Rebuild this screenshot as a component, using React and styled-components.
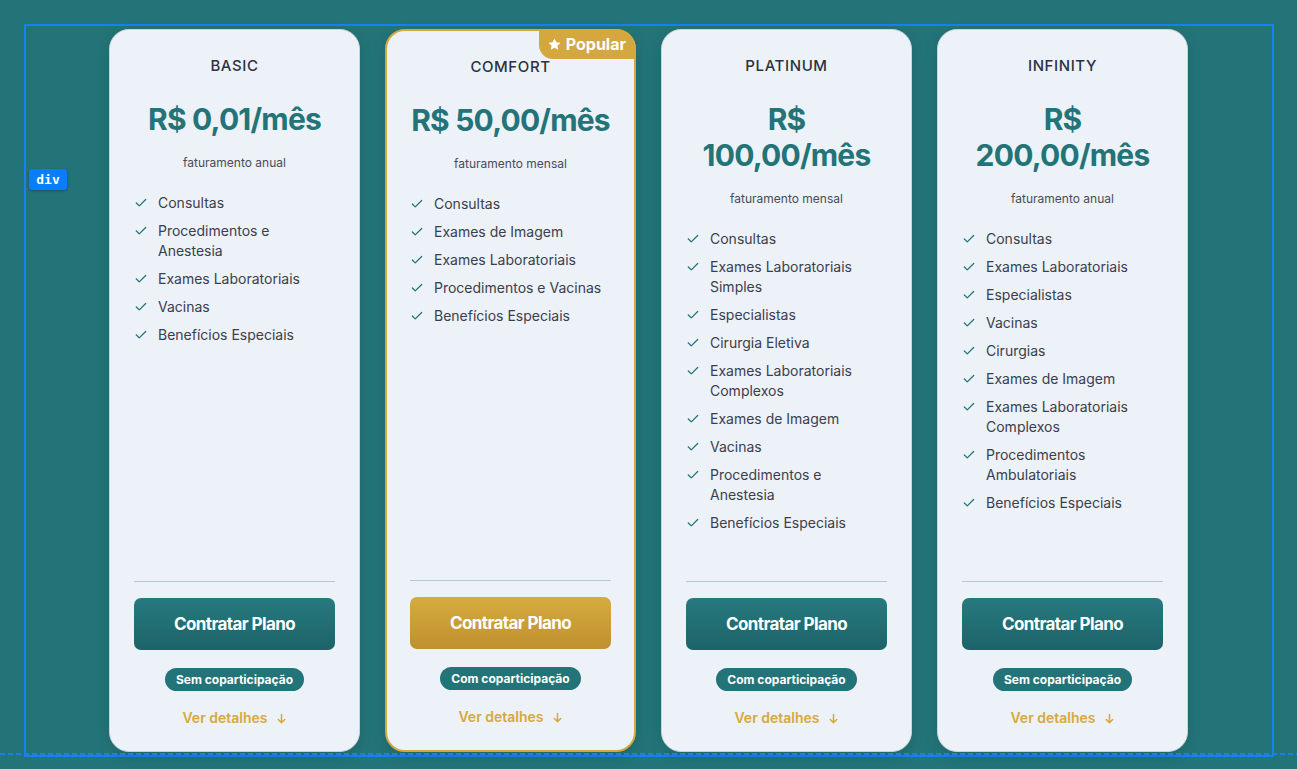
import React from "react";
import styled, { createGlobalStyle, css } from "styled-components";

const GlobalStyle = createGlobalStyle`
  html, body { margin: 0; padding: 0; }
  body {
    background: #237478;
    font-family: Inter, "Noto Sans", sans-serif;
    -webkit-font-smoothing: antialiased;
  }
  * { box-sizing: border-box; }
`;

const Page = styled.div`
  position: relative;
  min-height: 769px;
  padding: 24px 0 0 24px;
`;

const Frame = styled.div`
  position: relative;
  width: 1250px;
  height: 733px;
  border: 2px solid #1a7ff2;
  padding: 3px 1px 3px 0;
`;

const DashedLine = styled.div`
  position: absolute;
  left: 0;
  right: 0;
  top: 753px;
  height: 2px;
  background: repeating-linear-gradient(90deg, #1a7ff2 0 5px, transparent 5px 8px);
  pointer-events: none;
`;

const Tag = styled.div`
  position: absolute;
  left: 29px;
  top: 169px;
  width: 38px;
  height: 21px;
  border-radius: 3px;
  background: #0a7cff;
  color: #fff;
  font-family: "DejaVu Sans Mono", "Liberation Mono", monospace;
  font-size: 13px;
  font-weight: 700;
  display: flex;
  align-items: center;
  justify-content: center;
  box-shadow: 0 1px 3px rgba(0, 0, 0, 0.3);
`;

const Row = styled.div`
  height: 100%;
  display: flex;
  justify-content: center;
  gap: 25px;
`;

const Card = styled.div`
  position: relative;
  width: 251px;
  height: 723px;
  display: flex;
  flex-direction: column;
  background: #edf1f8;
  border: 1px solid #c9d3dc;
  border-radius: 20px;
  padding: 25px 24px 23px;
  box-shadow: 0 4px 14px rgba(0, 0, 0, 0.12);
  ${(p) =>
    p.$popular &&
    css`
      border: 2px solid #d4a83f;
      padding: 25px 23px 23px;
    `}
`;

const Ribbon = styled.div`
  position: absolute;
  top: -2px;
  right: -2px;
  height: 30px;
  padding: 0 10px 0 8px;
  display: flex;
  align-items: center;
  gap: 4px;
  background: #d4a83f;
  color: #fff;
  font-size: 16px;
  font-weight: 700;
  border-radius: 0 20px 0 14px;
`;

const Title = styled.div`
  text-align: center;
  font-size: 15px;
  line-height: 22px;
  font-weight: 500;
  letter-spacing: 0.6px;
  color: #2c323e;
`;

const Price = styled.div`
  margin-top: 24px;
  text-align: center;
  font-size: 30px;
  line-height: 36px;
  font-weight: 700;
  letter-spacing: -0.8px;
  color: #237479;
`;

const Billing = styled.div`
  margin-top: 18px;
  text-align: center;
  font-size: 12px;
  line-height: 16px;
  color: #474d5a;
`;

const Features = styled.ul`
  list-style: none;
  margin: 22px 0 0;
  padding: 0 2px 0 0;
  display: flex;
  flex-direction: column;
  gap: 8px;
  flex: 1;
`;

const Feature = styled.li`
  display: flex;
  align-items: flex-start;
  gap: 10px;
  font-size: 14px;
  line-height: 20px;
  color: #3a404c;
  svg { flex: none; margin-top: 3px; }
`;

const Divider = styled.hr`
  margin: 0;
  border: none;
  border-top: 1px solid #b3cbd5;
`;

const CtaButton = styled.button`
  margin-top: 16px;
  height: 52px;
  width: 100%;
  border: none;
  border-radius: 7px;
  font-family: Inter, sans-serif;
  font-size: 17px;
  font-weight: 700;
  letter-spacing: -0.6px;
  color: #fff;
  cursor: pointer;
  background: ${(p) =>
    p.$gold
      ? "linear-gradient(180deg, #d6ac3f 0%, #bf902f 100%)"
      : "linear-gradient(180deg, #267a7e 0%, #1c6369 100%)"};
`;

const Pill = styled.span`
  align-self: center;
  margin-top: 18px;
  height: 23px;
  padding: 0 11px;
  display: inline-flex;
  align-items: center;
  border-radius: 12px;
  background: #237478;
  color: #fff;
  font-size: 12px;
  font-weight: 700;
`;

const Details = styled.a`
  align-self: center;
  margin-top: 17px;
  display: inline-flex;
  align-items: center;
  gap: 8px;
  font-size: 14px;
  line-height: 20px;
  font-weight: 600;
  color: #d6a93c;
  text-decoration: none;
`;

const Check = () => (
  <svg width="14" height="14" viewBox="0 0 24 24" fill="none" stroke="#237479" strokeWidth="2.2" strokeLinecap="round" strokeLinejoin="round">
    <path d="M20 6 9 17l-5-5" />
  </svg>
);

const Star = () => (
  <svg width="15" height="15" viewBox="0 0 24 24" fill="#fff">
    <path d="M12 2.2l2.95 6.1 6.7.9-4.9 4.65 1.2 6.65L12 17.3l-5.95 3.2 1.2-6.65L2.35 9.2l6.7-.9z" />
  </svg>
);

const Arrow = () => (
  <svg width="11" height="11" viewBox="0 0 12 12" fill="none" stroke="#d6a93c" strokeWidth="1.6" strokeLinecap="round" strokeLinejoin="round">
    <path d="M6 1.5v9M2.5 7 6 10.5 9.5 7" />
  </svg>
);

const plans = [
  {
    name: "BASIC",
    price: "R$ 0,01/mês",
    billing: "faturamento anual",
    features: ["Consultas", "Procedimentos e Anestesia", "Exames Laboratoriais", "Vacinas", "Benefícios Especiais"],
    copart: "Sem coparticipação",
  },
  {
    name: "COMFORT",
    price: "R$ 50,00/mês",
    billing: "faturamento mensal",
    features: ["Consultas", "Exames de Imagem", "Exames Laboratoriais", "Procedimentos e Vacinas", "Benefícios Especiais"],
    copart: "Com coparticipação",
    popular: true,
  },
  {
    name: "PLATINUM",
    price: "R$ 100,00/mês",
    billing: "faturamento mensal",
    features: [
      "Consultas",
      "Exames Laboratoriais Simples",
      "Especialistas",
      "Cirurgia Eletiva",
      "Exames Laboratoriais Complexos",
      "Exames de Imagem",
      "Vacinas",
      "Procedimentos e Anestesia",
      "Benefícios Especiais",
    ],
    copart: "Com coparticipação",
  },
  {
    name: "INFINITY",
    price: "R$ 200,00/mês",
    billing: "faturamento anual",
    features: [
      "Consultas",
      "Exames Laboratoriais",
      "Especialistas",
      "Vacinas",
      "Cirurgias",
      "Exames de Imagem",
      "Exames Laboratoriais Complexos",
      "Procedimentos Ambulatoriais",
      "Benefícios Especiais",
    ],
    copart: "Sem coparticipação",
  },
];

export default function App() {
  return (
    <>
      <GlobalStyle />
      <Page>
        <Frame>
          <Row>
            {plans.map((p) => (
              <Card key={p.name} $popular={p.popular}>
                {p.popular && (
                  <Ribbon>
                    <Star />
                    Popular
                  </Ribbon>
                )}
                <Title>{p.name}</Title>
                <Price>{p.price}</Price>
                <Billing>{p.billing}</Billing>
                <Features>
                  {p.features.map((f) => (
                    <Feature key={f}>
                      <Check />
                      <span>{f}</span>
                    </Feature>
                  ))}
                </Features>
                <Divider />
                <CtaButton $gold={p.popular}>Contratar Plano</CtaButton>
                <Pill>{p.copart}</Pill>
                <Details href="#">
                  Ver detalhes <Arrow />
                </Details>
              </Card>
            ))}
          </Row>
        </Frame>
        <Tag>div</Tag>
        <DashedLine />
      </Page>
    </>
  );
}
